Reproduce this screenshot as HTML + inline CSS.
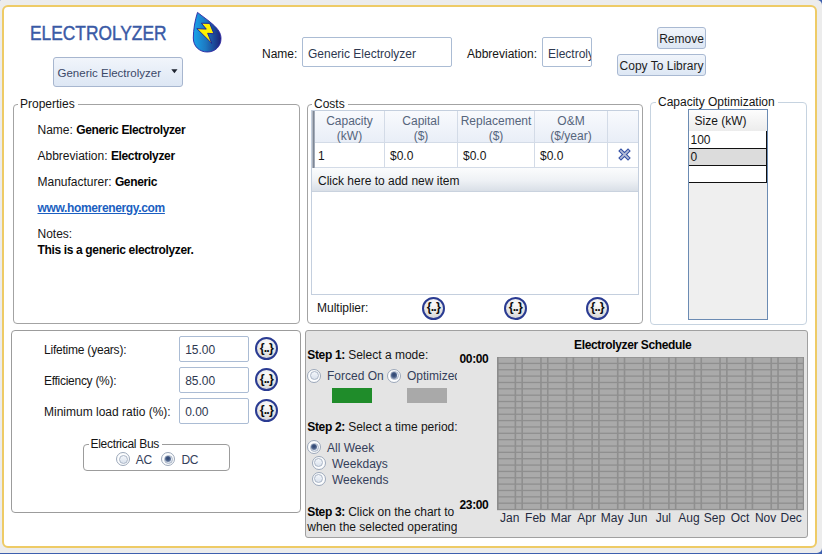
<!DOCTYPE html>
<html><head><meta charset="utf-8">
<style>
*{box-sizing:border-box;margin:0;padding:0}
html,body{width:822px;height:554px;overflow:hidden;background:#3d5fae}
body{position:relative;font-family:"Liberation Sans",sans-serif;font-size:12px;color:#151515}
.a{position:absolute}
.t{position:absolute;font-size:12px;line-height:12px;white-space:nowrap}
.b,b{font-weight:bold;letter-spacing:-0.35px;color:#050505}
#win{left:0;top:0;width:822px;height:553px;background:#ececec;border-radius:1px 5px 5px 0}
#frame{left:2px;top:5px;width:815px;height:543px;border:2px solid #eecb66;border-radius:6px;background:#fff}
.gb{position:absolute;border:1px solid #a3a3a3;border-radius:4px}
.lg{position:absolute;background:#fff;padding:0 3px 0 2px;font-size:12px;line-height:12px;white-space:nowrap}
.inp{position:absolute;border:1px solid #abbcd4;border-radius:2px;background:#fff;overflow:hidden}
.inp span{position:absolute;font-size:12px;line-height:12px;white-space:nowrap;color:#2e3850}
.btn{position:absolute;border:1px solid #a9b9d2;border-radius:3px;background:linear-gradient(#f1f5fb,#dde7f4);text-align:center;font-size:12px;color:#1e1e1e}
.mul{position:absolute;width:23px;height:23px;border-radius:50%;border:2px solid #2a3b92;background:radial-gradient(circle at 50% 25%,#fbfbfb 0,#e9e9e9 50%,#cdcdcd 100%)}
.mul span{position:absolute;left:-0.8px;top:2.7px;width:19.4px;text-align:center;font-weight:bold;font-size:12.5px;line-height:13px;color:#0d0d0d;letter-spacing:-0.9px;text-indent:0.9px}
.rad{position:absolute;width:14px;height:14px;border-radius:50%;border:1px solid #9ca8ba;background:#fcfdfe}
.rad::after{content:"";position:absolute;left:1.5px;top:1.5px;width:9px;height:9px;box-sizing:border-box;border-radius:50%;border:1px solid #aab5c6;background:linear-gradient(#f4f7fb,#d9e1ec)}
.rad.on::before{content:"";position:absolute;left:2.9px;top:2.9px;width:6.2px;height:6.2px;border-radius:50%;background:radial-gradient(circle at 50% 40%,#2e4470 0,#3f5680 35%,#7486a6 70%,#c5cedc 100%);z-index:1}
.rl{color:#34405a}
</style></head><body>
<div id="win" class="a"></div>
<div id="frame" class="a"></div>

<!-- title -->
<div class="t" style="left:30px;top:23px;font-size:19.6px;line-height:20px;color:#3a5aa6;-webkit-text-stroke:0.45px #3a5aa6;transform:scaleX(0.885);transform-origin:0 0">ELECTROLYZER</div>

<!-- drop icon -->
<svg class="a" style="left:188px;top:8px" width="40" height="48" viewBox="0 0 40 48">
<defs><linearGradient id="dg" x1="0" y1="0" x2="1" y2="0"><stop offset="0" stop-color="#19a4ec"/><stop offset="0.45" stop-color="#1d78c0"/><stop offset="1" stop-color="#1b2378"/></linearGradient></defs>
<path d="M9.5 4.4 C 7 12, 5.3 22, 5.3 30 C 5.3 38.5, 11.5 44, 19.3 44 C 27 44, 33 38.5, 33 30.5 C 33 25, 30 21, 25 16.5 C 20 12, 14 8, 9.5 4.4 Z" fill="url(#dg)" stroke="#2a22a0" stroke-width="0.9"/>
<path d="M13.4 15.2 L21.7 15.4 L25.9 25.7 L19.6 25.3 L23.8 35.4 L8.8 20.6 L18.3 21.1 Z" fill="#fff200" stroke="#1a1c96" stroke-width="0.9" stroke-linejoin="miter"/>
</svg>

<!-- dropdown -->
<div class="btn" style="left:53px;top:57px;width:130px;height:30px;border-color:#a7b6cf"></div>
<div class="t" style="left:57.5px;top:67px;color:#3a4868;font-size:11.5px">Generic Electrolyzer</div>
<svg class="a" style="left:170.5px;top:68.5px" width="7" height="5"><path d="M0.3 0.3 L6.5 0.3 L3.4 4.3 Z" fill="#1e2430"/></svg>

<!-- name/abbrev -->
<div class="t" style="left:262px;top:47.5px">Name:</div>
<div class="inp" style="left:302px;top:37px;width:150px;height:30px"><span style="left:5px;top:9.8px">Generic Electrolyzer</span></div>
<div class="t" style="left:467px;top:47.5px">Abbreviation:</div>
<div class="inp" style="left:542px;top:37px;width:50px;height:30px"><span style="left:5px;top:9.8px">Electrolyzer</span></div>

<div class="btn" style="left:657px;top:27px;width:49px;height:22px;line-height:23px">Remove</div>
<div class="btn" style="left:617px;top:54px;width:89px;height:22px;line-height:23px">Copy To Library</div>

<!-- Properties -->
<div class="gb" style="left:13px;top:104px;width:287px;height:220px"></div>
<div class="lg" style="left:18px;top:98px">Properties</div>
<div class="t" style="left:37.5px;top:124px">Name: <b>Generic Electrolyzer</b></div>
<div class="t" style="left:37.5px;top:150px">Abbreviation: <b>Electrolyzer</b></div>
<div class="t" style="left:37.5px;top:176px">Manufacturer: <b>Generic</b></div>
<div class="t b" style="left:37.5px;top:202px;color:#1b5fc1;text-decoration:underline">www.homerenergy.com</div>
<div class="t" style="left:37.5px;top:228px">Notes:</div>
<div class="t b" style="left:37.5px;top:244px">This is a generic electrolyzer.</div>

<!-- Costs -->
<div class="gb" style="left:307px;top:104px;width:336px;height:220px"></div>
<div class="lg" style="left:312px;top:98px">Costs</div>
<div class="a" style="left:311px;top:110px;width:328px;height:185px;border:1px solid #c4cfde;background:#fff"></div>
<div class="a" style="left:312px;top:111px;width:326px;height:32px;background:linear-gradient(#f8fafd,#e9eef7);border-bottom:1px solid #d3dbe7"></div>
<div class="a" style="left:312px;top:143px;width:326px;height:25px;background:#fff;border-bottom:1px solid #d3dbe7"></div>
<div class="a" style="left:312px;top:111px;width:3px;height:57px;background:linear-gradient(90deg,#c8ccd4,#7d8796 50%,#b5bcc8)"></div>
<div class="a" style="left:384px;top:111px;width:1px;height:57px;background:#d3dbe7"></div>
<div class="a" style="left:457px;top:111px;width:1px;height:57px;background:#d3dbe7"></div>
<div class="a" style="left:534px;top:111px;width:1px;height:57px;background:#d3dbe7"></div>
<div class="a" style="left:607px;top:111px;width:1px;height:57px;background:#d3dbe7"></div>
<div class="t" style="left:315px;width:69px;top:113.5px;text-align:center;color:#56657c;line-height:15.5px">Capacity<br>(kW)</div>
<div class="t" style="left:385px;width:72px;top:113.5px;text-align:center;color:#56657c;line-height:15.5px">Capital<br>($)</div>
<div class="t" style="left:458px;width:76px;top:113.5px;text-align:center;color:#56657c;line-height:15.5px">Replacement<br>($)</div>
<div class="t" style="left:535px;width:72px;top:113.5px;text-align:center;color:#56657c;line-height:15.5px">O&amp;M<br>($/year)</div>
<div class="t" style="left:318px;top:149.5px">1</div>
<div class="t" style="left:390px;top:149.5px">$0.0</div>
<div class="t" style="left:463px;top:149.5px">$0.0</div>
<div class="t" style="left:540px;top:149.5px">$0.0</div>
<svg class="a" style="left:617px;top:147px" width="15" height="15" viewBox="0 0 15 15"><g stroke-linecap="butt"><path d="M2.6 2.6 L12.4 12.4 M12.4 2.6 L2.6 12.4" stroke="#3753a6" stroke-width="3.9"/><path d="M3.3 3.3 L11.7 11.7 M11.7 3.3 L3.3 11.7" stroke="#b5bdd6" stroke-width="1.7"/></g></svg>
<div class="a" style="left:312px;top:168px;width:326px;height:24px;background:linear-gradient(#fbfcfd,#eef1f5 55%,#d9dfe7);border-bottom:1px solid #c9d2de"></div>
<div class="t" style="left:318px;top:175px">Click here to add new item</div>
<div class="t" style="left:317px;top:302px">Multiplier:</div>
<div class="mul" style="left:422px;top:296.6px"><span>{..}</span></div>
<div class="mul" style="left:504px;top:296.6px"><span>{..}</span></div>
<div class="mul" style="left:585.8px;top:296.6px"><span>{..}</span></div>


<!-- Capacity optimization -->
<div class="gb" style="left:650px;top:102px;width:157px;height:223px;border-color:#c6d3e0"></div>
<div class="lg" style="left:656px;top:96px">Capacity Optimization</div>
<div class="a" style="left:688px;top:109px;width:80px;height:211px;border:1px solid #6b8bb3;background:#efefef"></div>
<div class="a" style="left:689px;top:110px;width:78px;height:21px;background:linear-gradient(#fdfdfd,#ececec)"></div>
<div class="t" style="left:694.5px;top:114.5px">Size (kW)</div>
<div class="a" style="left:689px;top:131px;width:78px;height:18px;background:#fff;border-bottom:1.5px solid #111;border-right:1.5px solid #111"></div>
<div class="a" style="left:689px;top:149px;width:78px;height:17px;background:#dcdcdc;border-bottom:1.5px solid #111;border-right:1.5px solid #111"></div>
<div class="a" style="left:689px;top:166px;width:78px;height:17px;background:#fff;border-bottom:1.5px solid #111;border-right:1.5px solid #111"></div>
<div class="t" style="left:690.5px;top:133.5px">100</div>
<div class="t" style="left:690.5px;top:150.5px">0</div>


<!-- lower left -->
<div class="gb" style="left:11px;top:330px;width:290px;height:183px;border:1.6px solid #9c9c9c"></div>
<div class="t" style="left:44px;top:343.5px;letter-spacing:-0.22px">Lifetime (years):</div>
<div class="t" style="left:44px;top:374.5px;letter-spacing:-0.28px">Efficiency (%):</div>
<div class="t" style="left:44px;top:405.5px">Minimum load ratio (%):</div>
<div class="inp" style="left:179px;top:336px;width:70px;height:26px"><span style="left:5.2px;top:7px">15.00</span></div>
<div class="inp" style="left:179px;top:367px;width:70px;height:26px"><span style="left:5.2px;top:7px">85.00</span></div>
<div class="inp" style="left:179px;top:398px;width:70px;height:26px"><span style="left:5.2px;top:7px">0.00</span></div>
<div class="mul" style="left:255px;top:337px"><span>{..}</span></div>
<div class="mul" style="left:255px;top:368px"><span>{..}</span></div>
<div class="mul" style="left:255px;top:399px"><span>{..}</span></div>
<div class="gb" style="left:83px;top:444px;width:147px;height:27px;border-color:#9c9c9c"></div>
<div class="lg" style="left:88.5px;top:437.5px;letter-spacing:-0.3px">Electrical Bus</div>
<div class="rad" style="left:116px;top:452px"></div>
<div class="t rl" style="left:135.8px;top:453.5px;letter-spacing:-0.3px">AC</div>
<div class="rad on" style="left:161px;top:452px"></div>
<div class="t rl" style="left:181.4px;top:453.5px;letter-spacing:-0.3px">DC</div>


<!-- schedule -->
<div class="a" style="left:305px;top:330px;width:503px;height:208px;background:#e4e4e4;border:1.5px solid #a0a0a0;border-radius:3px"></div>
<div class="a" style="left:306px;top:331px;width:151px;height:206px;overflow:hidden">
<div class="t" style="left:1.3px;top:17.6px"><b>Step 1:</b> Select a mode:</div>
<div class="rad" style="left:1.4px;top:37.6px"></div>
<div class="t rl" style="left:21px;top:39px">Forced On</div>
<div class="rad on" style="left:81.2px;top:37.6px"></div>
<div class="t rl" style="left:101px;top:39px">Optimized</div>
<div class="a" style="left:26px;top:57px;width:40px;height:15px;background:#1f8c2a"></div>
<div class="a" style="left:101px;top:57px;width:40px;height:15px;background:#a9a9a9"></div>
<div class="t" style="left:1.3px;top:89.5px"><b>Step 2:</b> Select a time period:</div>
<div class="rad on" style="left:1px;top:109px"></div>
<div class="t rl" style="left:21px;top:110.5px">All Week</div>
<div class="rad" style="left:5.6px;top:124.8px"></div>
<div class="t rl" style="left:26px;top:126.5px">Weekdays</div>
<div class="rad" style="left:5.6px;top:140.7px"></div>
<div class="t rl" style="left:26px;top:142.5px">Weekends</div>
<div class="t" style="left:1.3px;top:174.6px"><b>Step 3:</b> Click on the chart to define</div>
<div class="t" style="left:1.3px;top:190.4px">when the selected operating mode</div>
</div>
<div class="t b" style="left:459.5px;top:352.8px">00:00</div>
<div class="t b" style="left:459.5px;top:498.5px">23:00</div>
<div class="t b" style="left:574px;top:339px">Electrolyzer Schedule</div>
<svg class="a" style="left:497px;top:357px" width="307" height="153.5"><rect x="0" y="0" width="307" height="152.5" fill="#aaaaaa"/><rect x="0" y="-0.60" width="307" height="1.3" fill="#8f8f8f"/><rect x="0" y="5.75" width="307" height="1.3" fill="#8f8f8f"/><rect x="0" y="12.11" width="307" height="1.3" fill="#8f8f8f"/><rect x="0" y="18.46" width="307" height="1.3" fill="#8f8f8f"/><rect x="0" y="24.82" width="307" height="1.3" fill="#8f8f8f"/><rect x="0" y="31.17" width="307" height="1.3" fill="#8f8f8f"/><rect x="0" y="37.52" width="307" height="1.3" fill="#8f8f8f"/><rect x="0" y="43.88" width="307" height="1.3" fill="#8f8f8f"/><rect x="0" y="50.23" width="307" height="1.3" fill="#8f8f8f"/><rect x="0" y="56.59" width="307" height="1.3" fill="#8f8f8f"/><rect x="0" y="62.94" width="307" height="1.3" fill="#8f8f8f"/><rect x="0" y="69.30" width="307" height="1.3" fill="#8f8f8f"/><rect x="0" y="75.65" width="307" height="1.3" fill="#8f8f8f"/><rect x="0" y="82.00" width="307" height="1.3" fill="#8f8f8f"/><rect x="0" y="88.36" width="307" height="1.3" fill="#8f8f8f"/><rect x="0" y="94.71" width="307" height="1.3" fill="#8f8f8f"/><rect x="0" y="101.07" width="307" height="1.3" fill="#8f8f8f"/><rect x="0" y="107.42" width="307" height="1.3" fill="#8f8f8f"/><rect x="0" y="113.78" width="307" height="1.3" fill="#8f8f8f"/><rect x="0" y="120.13" width="307" height="1.3" fill="#8f8f8f"/><rect x="0" y="126.48" width="307" height="1.3" fill="#8f8f8f"/><rect x="0" y="132.84" width="307" height="1.3" fill="#8f8f8f"/><rect x="0" y="139.19" width="307" height="1.3" fill="#8f8f8f"/><rect x="0" y="145.55" width="307" height="1.3" fill="#8f8f8f"/><rect x="0" y="151.90" width="307" height="1.3" fill="#8f8f8f"/><rect x="0" y="0" width="1.6" height="152.5" fill="#8c8c8c"/><rect x="17.58" y="0" width="1.6" height="152.5" fill="#8f8f8f"/><rect x="24.38" y="0" width="1.6" height="152.5" fill="#8f8f8f"/><rect x="43.17" y="0" width="1.6" height="152.5" fill="#8f8f8f"/><rect x="49.97" y="0" width="1.6" height="152.5" fill="#8f8f8f"/><rect x="68.75" y="0" width="1.6" height="152.5" fill="#8f8f8f"/><rect x="75.55" y="0" width="1.6" height="152.5" fill="#8f8f8f"/><rect x="94.33" y="0" width="1.6" height="152.5" fill="#8f8f8f"/><rect x="101.13" y="0" width="1.6" height="152.5" fill="#8f8f8f"/><rect x="119.92" y="0" width="1.6" height="152.5" fill="#8f8f8f"/><rect x="126.72" y="0" width="1.6" height="152.5" fill="#8f8f8f"/><rect x="145.50" y="0" width="1.6" height="152.5" fill="#8f8f8f"/><rect x="152.30" y="0" width="1.6" height="152.5" fill="#8f8f8f"/><rect x="171.08" y="0" width="1.6" height="152.5" fill="#8f8f8f"/><rect x="177.88" y="0" width="1.6" height="152.5" fill="#8f8f8f"/><rect x="196.67" y="0" width="1.6" height="152.5" fill="#8f8f8f"/><rect x="203.47" y="0" width="1.6" height="152.5" fill="#8f8f8f"/><rect x="222.25" y="0" width="1.6" height="152.5" fill="#8f8f8f"/><rect x="229.05" y="0" width="1.6" height="152.5" fill="#8f8f8f"/><rect x="247.83" y="0" width="1.6" height="152.5" fill="#8f8f8f"/><rect x="254.63" y="0" width="1.6" height="152.5" fill="#8f8f8f"/><rect x="273.42" y="0" width="1.6" height="152.5" fill="#8f8f8f"/><rect x="280.22" y="0" width="1.6" height="152.5" fill="#8f8f8f"/><rect x="299.00" y="0" width="1.6" height="152.5" fill="#8f8f8f"/><rect x="305.80" y="0" width="1.6" height="152.5" fill="#8f8f8f"/></svg>
<div class="t rl" style="left:497.0px;width:25.6px;text-align:center;top:512px;color:#242b40">Jan</div><div class="t rl" style="left:522.6px;width:25.6px;text-align:center;top:512px;color:#242b40">Feb</div><div class="t rl" style="left:548.2px;width:25.6px;text-align:center;top:512px;color:#242b40">Mar</div><div class="t rl" style="left:573.8px;width:25.6px;text-align:center;top:512px;color:#242b40">Apr</div><div class="t rl" style="left:599.3px;width:25.6px;text-align:center;top:512px;color:#242b40">May</div><div class="t rl" style="left:624.9px;width:25.6px;text-align:center;top:512px;color:#242b40">Jun</div><div class="t rl" style="left:650.5px;width:25.6px;text-align:center;top:512px;color:#242b40">Jul</div><div class="t rl" style="left:676.1px;width:25.6px;text-align:center;top:512px;color:#242b40">Aug</div><div class="t rl" style="left:701.7px;width:25.6px;text-align:center;top:512px;color:#242b40">Sep</div><div class="t rl" style="left:727.2px;width:25.6px;text-align:center;top:512px;color:#242b40">Oct</div><div class="t rl" style="left:752.8px;width:25.6px;text-align:center;top:512px;color:#242b40">Nov</div><div class="t rl" style="left:778.4px;width:25.6px;text-align:center;top:512px;color:#242b40">Dec</div>


</body></html>
